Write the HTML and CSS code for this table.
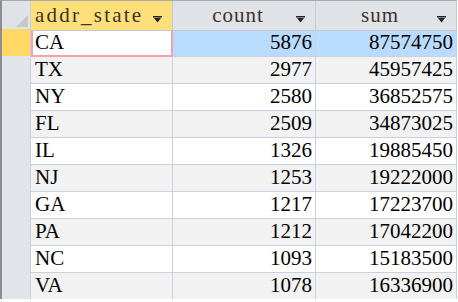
FILE: index.html
```html
<!DOCTYPE html>
<html lang="en">

<head>
  <meta charset="UTF-8">
  <title>addr_state</title>
  <link rel="stylesheet" href="styles.css">
</head>

<body>
  <div class="sheet">
    <div class="row head">
      <div class="sel corner">
        <svg width="12" height="12" viewBox="0 0 12 12"><polygon points="12,0 12,12 0,12" fill="#c4c8ce" /></svg>
      </div>
      <div class="hcell active left">addr_state
        <svg class="drop" width="9" height="7" viewBox="0 0 9 7"><rect x="0" y="0" width="9" height="1.5" fill="#222" /><polygon points="1,2 8,2 4.5,6.5" fill="#222" /></svg>
      </div>
      <div class="hcell">count
        <svg class="drop" width="9" height="7" viewBox="0 0 9 7"><rect x="0" y="0" width="9" height="1.5" fill="#222" /><polygon points="1,2 8,2 4.5,6.5" fill="#222" /></svg>
      </div>
      <div class="hcell">sum
        <svg class="drop" width="9" height="7" viewBox="0 0 9 7"><rect x="0" y="0" width="9" height="1.5" fill="#222" /><polygon points="1,2 8,2 4.5,6.5" fill="#222" /></svg>
      </div>
    </div>

    <div class="row current">
      <div class="sel"></div>
      <div class="cell txt focus">CA</div>
      <div class="cell num">5876</div>
      <div class="cell num">87574750</div>
    </div>
    <div class="row alt">
      <div class="sel"></div>
      <div class="cell txt">TX</div>
      <div class="cell num">2977</div>
      <div class="cell num">45957425</div>
    </div>
    <div class="row">
      <div class="sel"></div>
      <div class="cell txt">NY</div>
      <div class="cell num">2580</div>
      <div class="cell num">36852575</div>
    </div>
    <div class="row alt">
      <div class="sel"></div>
      <div class="cell txt">FL</div>
      <div class="cell num">2509</div>
      <div class="cell num">34873025</div>
    </div>
    <div class="row">
      <div class="sel"></div>
      <div class="cell txt">IL</div>
      <div class="cell num">1326</div>
      <div class="cell num">19885450</div>
    </div>
    <div class="row alt">
      <div class="sel"></div>
      <div class="cell txt">NJ</div>
      <div class="cell num">1253</div>
      <div class="cell num">19222000</div>
    </div>
    <div class="row">
      <div class="sel"></div>
      <div class="cell txt">GA</div>
      <div class="cell num">1217</div>
      <div class="cell num">17223700</div>
    </div>
    <div class="row alt">
      <div class="sel"></div>
      <div class="cell txt">PA</div>
      <div class="cell num">1212</div>
      <div class="cell num">17042200</div>
    </div>
    <div class="row">
      <div class="sel"></div>
      <div class="cell txt">NC</div>
      <div class="cell num">1093</div>
      <div class="cell num">15183500</div>
    </div>
    <div class="row alt">
      <div class="sel"></div>
      <div class="cell txt">VA</div>
      <div class="cell num">1078</div>
      <div class="cell num">16336900</div>
    </div>
  </div>
</body>

</html>
```

FILE: styles.css
```css
:root {
  --grid-line: #c9d1e1;
  --head-bg: #dfe2e7;
  --head-active: #ffdf7a;
  --sel-bg: #e1e4e8;
  --sel-current: #ffd964;
  --row-alt: #f2f2f2;
  --row-selected: #b9dbfd;
  --focus-border: #f2a4a8;
}

* {
  box-sizing: border-box;
}

body {
  margin: 0;
  background: #ffffff;
  font-family: "Liberation Serif", "Times New Roman", serif;
  font-size: 21px;
  color: #000000;
  overflow: hidden;
}

.sheet {
  width: 457px;
  border-top: 1px solid #a9a9a9;
  border-left: 2px solid #8e8e8e;
}

.row {
  display: grid;
  grid-template-columns: 29px 142px 143px 141px;
  height: 27px;
  background: #ffffff;
}

.row.alt {
  background: var(--row-alt);
}

.row.head {
  height: 28px;
}

.sel {
  background: var(--sel-bg);
  border-right: 1px solid var(--grid-line);
  border-bottom: 1px solid #b7bdc8;
}

.row.current .sel {
  background: var(--sel-current);
}

.corner {
  background: var(--head-bg);
  display: flex;
  align-items: flex-end;
  justify-content: flex-end;
  padding: 0 2px 3px 0;
  border-bottom: 1px solid #c4c9d2;
}

.hcell {
  position: relative;
  background: var(--head-bg);
  border-right: 1px solid #c4c9d2;
  border-bottom: 1px solid #c4c9d2;
  color: #3e3326;
  text-align: center;
  line-height: 29px;
  padding-right: 12px;
  letter-spacing: 1px;
}

.hcell.left {
  text-align: left;
  padding-left: 4px;
  letter-spacing: 2.2px;
}

.hcell.active {
  background: var(--head-active);
}

.drop {
  position: absolute;
  right: 10px;
  top: 15px;
}

.cell {
  border-right: 1px solid var(--grid-line);
  border-bottom: 1px solid var(--grid-line);
  line-height: 27px;
  white-space: nowrap;
}

.txt {
  padding-left: 4px;
}

.num {
  text-align: right;
  padding-right: 3px;
}

.row.current .num {
  background: var(--row-selected);
}

.cell.focus {
  background: #ffffff;
  border: 2px solid var(--focus-border);
  border-top-width: 1px;
  line-height: 25px;
  padding-left: 2px;
}
```
